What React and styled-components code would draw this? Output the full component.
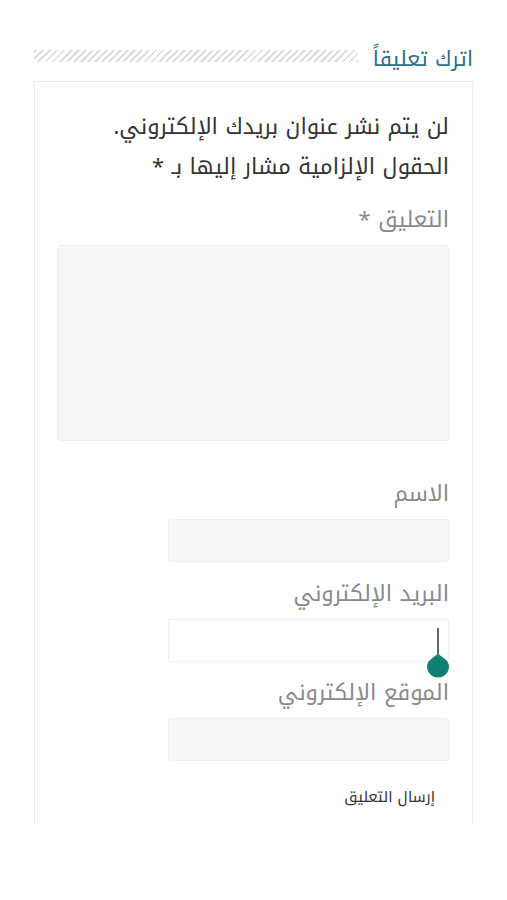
import React from "react";
import styled, { createGlobalStyle } from "styled-components";

const Global = createGlobalStyle`
  html, body {
    margin: 0;
    padding: 0;
    background: #fff;
  }
  body {
    font-family: "Noto Kufi Arabic", "Noto Sans Arabic", "DejaVu Sans", sans-serif;
  }
`;

const Page = styled.div`
  direction: rtl;
  width: 507px;
  padding: 42px 34px 0 34px;
  box-sizing: border-box;
`;

const TitleRow = styled.div`
  display: flex;
  align-items: center;
  gap: 15px;
  height: 34px;
`;

const Title = styled.h3`
  margin: 0;
  font-size: 21px;
  font-weight: normal;
  color: #2b6f88;
  white-space: nowrap;
`;

const Stripes = styled.div`
  flex: 1;
  height: 12px;
  margin-top: -6px;
  background: repeating-linear-gradient(
    -45deg,
    #dddddd 0 2px,
    #fff 2px 5px
  );
`;

const Box = styled.div`
  margin-top: 5px;
  border: 1px solid #ececec;
  border-bottom: none;
  padding: 25px 23px 16px 22px;
  box-sizing: border-box;
`;

const Notes = styled.p`
  margin: 0 0 14px;
  font-size: 22px;
  line-height: 40px;
  color: #333;
`;

const Label = styled.label`
  display: block;
  font-size: 22px;
  color: #8a8a8a;
  line-height: 38px;
  margin-bottom: 6px;
`;

const Field = styled.div`
  position: relative;
  margin-bottom: ${(p) => p.$gap ?? 12}px;
`;

const Input = styled.input`
  display: block;
  width: ${(p) => p.$w || 281}px;
  height: ${(p) => p.$h || 43}px;
  box-sizing: border-box;
  border: 1px solid #eeeeee;
  border-radius: 3px;
  background: ${(p) => (p.$white ? "#fff" : "#f7f7f7")};
  outline: none;
`;

const TextArea = styled.textarea`
  display: block;
  width: 392px;
  height: 196px;
  box-sizing: border-box;
  border: 1px solid #eeeeee;
  border-radius: 3px;
  background: #f7f7f7;
  resize: none;
  outline: none;
`;

const Handle = styled.svg`
  position: absolute;
  top: 9px;
  right: -1px;
  width: 24px;
  height: 50px;
`;

const Submit = styled.button`
  display: block;
  margin: 24px 14px 0 0;
  padding: 0;
  border: none;
  background: none;
  font-family: inherit;
  font-size: 15px;
  line-height: 24px;
  color: #333;
`;

export default function App() {
  return (
    <Page>
      <Global />
      <TitleRow>
        <Title>اترك تعليقاً</Title>
        <Stripes />
      </TitleRow>
      <Box>
        <Notes>
          لن يتم نشر عنوان بريدك الإلكتروني.
          <br />
          الحقول الإلزامية مشار إليها بـ *
        </Notes>
        <Label>التعليق *</Label>
        <Field $gap={34}>
          <TextArea />
        </Field>
        <Label>الاسم</Label>
        <Field $gap={13}>
          <Input />
        </Field>
        <Label>البريد الإلكتروني</Label>
        <Field $gap={12}>
          <Input $white />
          <Handle viewBox="0 0 24 50">
            <line x1="12" y1="0" x2="12" y2="30" stroke="#666" strokeWidth="2" />
            <path
              d="M12 25 C14 29 23 31 23 38.5 A11 11 0 1 1 1 38.5 C1 31 10 29 12 25 Z"
              fill="#0f8170"
            />
          </Handle>
        </Field>
        <Label>الموقع الإلكتروني</Label>
        <Field $gap={0}>
          <Input />
        </Field>
        <Submit>إرسال التعليق</Submit>
      </Box>
    </Page>
  );
}
